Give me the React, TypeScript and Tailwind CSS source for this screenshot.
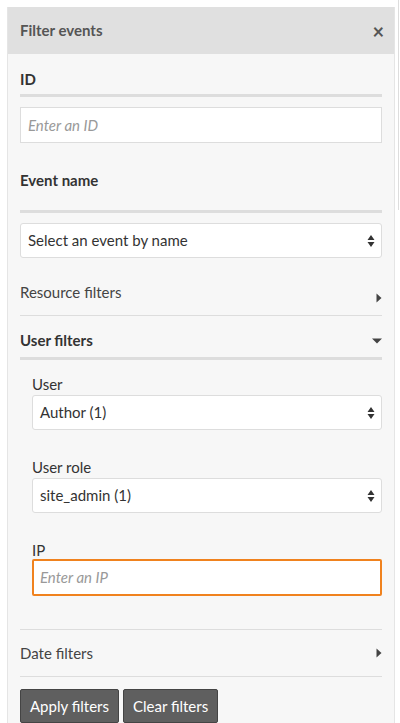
import React from "react";

const Arrows = () => (
  <svg width="8" height="14" viewBox="0 0 8 14" className="shrink-0"><path d="M4 1 L7.5 6 H0.5Z M4 13 L7.5 8 H0.5Z" fill="#333" /></svg>
);
const Right = () => (
  <svg width="6" height="10" viewBox="0 0 6 10"><path d="M0.5 0.5 L5.5 5 L0.5 9.5Z" fill="#444" /></svg>
);
const Down = () => (
  <svg width="10" height="6" viewBox="0 0 10 6"><path d="M0 0.5 H10 L5 5.5Z" fill="#444" /></svg>
);

const Select = ({ text }: { text: string }) => (
  <div className="h-[35px] bg-white border border-[#ddd] rounded-[3px] flex items-center justify-between pl-[7px] pr-[6px] text-[15px] text-[#333]">
    <span>{text}</span>
    <Arrows />
  </div>
);

export default function App() {
  return (
    <div className="w-[400px] h-[723px] bg-white pt-[7px] pl-[7px] overflow-hidden relative" style={{ fontFamily: "Lato, 'Open Sans', sans-serif" }}>
      <div className="absolute right-[1px] top-0 w-[1px] h-[210px] bg-[#ddd]" />
      <div className="w-[388px] h-[740px] bg-[#f7f7f7] border-l border-r border-[#e5e5e5]">
        <div className="h-[47px] bg-[#e0e0e0] flex items-center justify-between pl-[12px] pr-[10px]">
          <span className="text-[15px] font-bold text-[#555]">Filter events</span>
          <span className="text-[20px] font-bold text-[#555] leading-none">×</span>
        </div>
        <div className="px-[12px]">
          <div className="pt-[14px] text-[15px] font-bold text-[#333] h-[40px]">ID</div>
          <div className="h-[3px] bg-[#ddd]" />
          <div className="mt-[10px] h-[36px] bg-white border border-[#ddd] flex items-center pl-[7px] text-[15px] italic text-[#999]">Enter an ID</div>
          <div className="pt-[26px] h-[67px] text-[15px] font-bold text-[#333]">Event name</div>
          <div className="h-[3px] bg-[#ddd]" />
          <div className="mt-[10px]"><Select text="Select an event by name" /></div>
          <div className="h-[57px] flex items-end pb-[12px] justify-between text-[15px] text-[#444]">
            <span>Resource filters</span><Right />
          </div>
          <div className="h-[1px] bg-[#ddd]" />
          <div className="h-[41px] flex items-center justify-between text-[15px] font-bold text-[#333] pt-[8px]">
            <span>User filters</span><Down />
          </div>
          <div className="h-[3px] bg-[#ddd]" />
          <div className="pl-[12px]">
            <div className="pt-[13px] text-[15px] text-[#333] h-[35px]">User</div>
            <Select text="Author (1)" />
            <div className="pt-[26px] text-[15px] text-[#333] h-[48px]">User role</div>
            <Select text="site_admin (1)" />
            <div className="pt-[26px] text-[15px] text-[#333] h-[46px]">IP</div>
            <div className="h-[37px] bg-white border-2 border-[#f0821e] rounded-[2px] flex items-center pl-[6px] text-[15px] italic text-[#999]">Enter an IP</div>
          </div>
          <div className="h-[33px]" />
          <div className="h-[1px] bg-[#ddd]" />
          <div className="h-[46px] flex items-center justify-between text-[15px] text-[#444]">
            <span>Date filters</span><Right />
          </div>
          <div className="h-[1px] bg-[#ddd]" />
          <div className="mt-[12px] flex gap-[4px]">
            <button className="h-[34px] px-[9px] bg-[#5f5f5f] border border-[#444] rounded-[2px] text-white text-[15px]">Apply filters</button>
            <button className="h-[34px] px-[9px] bg-[#5f5f5f] border border-[#444] rounded-[2px] text-white text-[15px]">Clear filters</button>
          </div>
        </div>
      </div>
    </div>
  );
}
